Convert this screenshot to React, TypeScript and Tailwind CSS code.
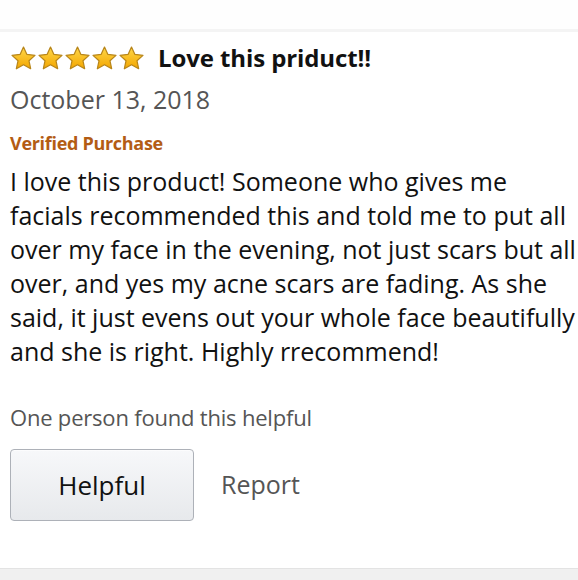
import React from 'react';

const Star: React.FC<{ id: number }> = ({ id }) => (
  <svg width="27" height="27" viewBox="0 0 24 24">
    <defs>
      <linearGradient id={`sg${id}`} x1="0" y1="0" x2="0" y2="1">
        <stop offset="0%" stopColor="#ffd84a" />
        <stop offset="100%" stopColor="#f3a600" />
      </linearGradient>
    </defs>
    <path
      d="M12 1.8l3.05 6.6 7.15.8-5.3 4.85 1.45 7.05L12 17.5l-6.35 3.6 1.45-7.05L1.8 9.2l7.15-.8z"
      fill={`url(#sg${id})`}
      stroke="#b8861b"
      strokeWidth="1.1"
      strokeLinejoin="round"
    />
  </svg>
);

const lines = [
  'I love this product! Someone who gives me',
  'facials recommended this and told me to put all',
  'over my face in the evening, not just scars but all',
  'over, and yes my acne scars are fading. As she',
  'said, it just evens out your whole face beautifully',
  'and she is right. Highly rrecommend!',
];

const App: React.FC = () => {
  return (
    <div className="w-[578px] h-[580px] bg-white flex flex-col overflow-hidden" style={{ fontFamily: '"Open Sans", "Noto Sans", sans-serif' }}>
      <div className="h-[29px] bg-[#fefefe]" />
      <div className="h-[3px] bg-[#f4f4f4]" />
      <div className="flex-1 pl-[10px]">
        <div className="flex items-center h-[34px] mt-[9px]">
          <div className="flex gap-0">
            {[0, 1, 2, 3, 4].map((i) => (
              <Star key={i} id={i} />
            ))}
          </div>
          <span className="ml-[13px] text-[24px] font-bold text-[#111] tracking-[-0.1px]">Love this priduct!!</span>
        </div>
        <div className="mt-[7px] text-[25px] leading-[34px] text-[#555]">October 13, 2018</div>
        <div className="mt-[15px] text-[18px] leading-[24px] font-bold text-[#b35c14] tracking-[-0.3px]">Verified Purchase</div>
        <p className="mt-[9px] text-[25px] leading-[34px] text-[#111] whitespace-nowrap">
          {lines.map((l, i) => (
            <React.Fragment key={i}>
              {l}
              {i < lines.length - 1 && <br />}
            </React.Fragment>
          ))}
        </p>
        <div className="mt-[34px] text-[22px] leading-[30px] text-[#555] tracking-[-0.2px]">One person found this helpful</div>
        <div className="mt-[17px] flex items-center">
          <button className="w-[184px] h-[72px] rounded-[4px] border border-[#adb1b8] bg-gradient-to-b from-[#f7f8fa] to-[#e7e9ec] text-[26px] text-[#111] shadow-[0_1px_0_rgba(255,255,255,0.6)_inset]">
            Helpful
          </button>
          <span className="ml-[27px] text-[25px] text-[#555]">Report</span>
        </div>
      </div>
      <div className="h-px bg-[#e3e3e3]" />
      <div className="h-[11px] bg-[#f0f0f0]" />
    </div>
  );
};

export default App;
